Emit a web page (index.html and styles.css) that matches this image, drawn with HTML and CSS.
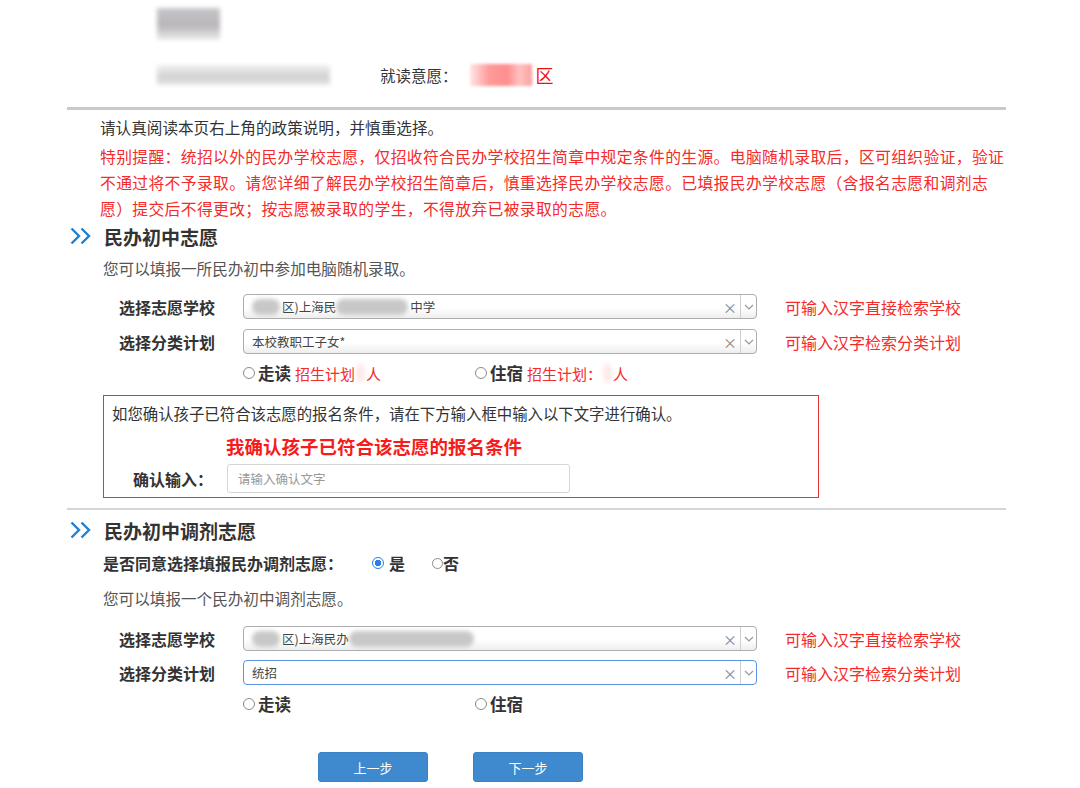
FILE: index.html
```html
<!DOCTYPE html>
<html lang="zh-CN">
<head>
<meta charset="utf-8">
<title>民办初中志愿</title>
<link rel="stylesheet" href="styles.css">
</head>
<body>
<div class="top">
  <div class="blur blur-name"></div>
  <div class="info-row">
    <div class="blur blur-id"></div>
    <span class="info-label">就读意愿：</span>
    <span class="blur-pink"></span>
    <span class="info-area">区</span>
  </div>
</div>
<div class="rule"></div>

<div class="main">
  <p class="notice">请认真阅读本页右上角的政策说明，并慎重选择。</p>
  <p class="warn">特别提醒：统招以外的民办学校志愿，仅招收符合民办学校招生简章中规定条件的生源。电脑随机录取后，区可组织验证，验证<br>不通过将不予录取。请您详细了解民办学校招生简章后，慎重选择民办学校志愿。已填报民办学校志愿（含报名志愿和调剂志<br>愿）提交后不得更改；按志愿被录取的学生，不得放弃已被录取的志愿。</p>

  <h2 class="sec-title">
    <svg class="chev" viewBox="0 0 22 18" width="22" height="18"><path d="M1.5 1.5 L9 9 L1.5 16.5 M11.5 1.5 L19 9 L11.5 16.5" fill="none" stroke="#1f7fd1" stroke-width="2.4"/></svg>
    民办初中志愿
  </h2>
  <p class="desc">您可以填报一所民办初中参加电脑随机录取。</p>

  <div class="form-row r1">
    <label class="f-label">选择志愿学校</label>
    <div class="select">
      <span class="sel-text"><span class="blur-s w28"></span>区)上海民<span class="blur-s w70"></span>中学</span>
      <span class="sel-x">×</span><span class="sel-arrow"><svg viewBox="0 0 10 6" width="10" height="6"><path d="M1 1 L5 5 L9 1" fill="none" stroke="#999" stroke-width="1.2"/></svg></span>
    </div>
    <span class="hint">可输入汉字直接检索学校</span>
  </div>
  <div class="form-row r2">
    <label class="f-label">选择分类计划</label>
    <div class="select">
      <span class="sel-text">本校教职工子女*</span>
      <span class="sel-x">×</span><span class="sel-arrow"><svg viewBox="0 0 10 6" width="10" height="6"><path d="M1 1 L5 5 L9 1" fill="none" stroke="#999" stroke-width="1.2"/></svg></span>
    </div>
    <span class="hint">可输入汉字检索分类计划</span>
  </div>
  <div class="radio-row">
    <div class="radio-group"><span class="radio"></span><b>走读</b><span class="plan">招生计划<span class="blur-p"></span>人</span></div>
    <div class="radio-group"><span class="radio"></span><b>住宿</b><span class="plan">招生计划：<span class="blur-p"></span>人</span></div>
  </div>

  <div class="confirm-box">
    <p class="confirm-tip">如您确认孩子已符合该志愿的报名条件，请在下方输入框中输入以下文字进行确认。</p>
    <p class="confirm-text">我确认孩子已符合该志愿的报名条件</p>
    <div class="confirm-row">
      <label class="c-label">确认输入：</label>
      <div class="c-input">请输入确认文字</div>
    </div>
  </div>

  <div class="rule2"></div>

  <h2 class="sec-title t2">
    <svg class="chev" viewBox="0 0 22 18" width="22" height="18"><path d="M1.5 1.5 L9 9 L1.5 16.5 M11.5 1.5 L19 9 L11.5 16.5" fill="none" stroke="#1f7fd1" stroke-width="2.4"/></svg>
    民办初中调剂志愿
  </h2>
  <div class="agree-row">
    <span class="agree-label">是否同意选择填报民办调剂志愿：</span>
    <span class="radio checked"></span><b class="yes">是</b>
    <span class="radio small"></span><b class="no">否</b>
  </div>
  <p class="desc d2">您可以填报一个民办初中调剂志愿。</p>

  <div class="form-row r3">
    <label class="f-label">选择志愿学校</label>
    <div class="select">
      <span class="sel-text"><span class="blur-s w28"></span>区)上海民办<span class="blur-s w110"></span></span>
      <span class="sel-x">×</span><span class="sel-arrow"><svg viewBox="0 0 10 6" width="10" height="6"><path d="M1 1 L5 5 L9 1" fill="none" stroke="#999" stroke-width="1.2"/></svg></span>
    </div>
    <span class="hint">可输入汉字直接检索学校</span>
  </div>
  <div class="form-row r4">
    <label class="f-label">选择分类计划</label>
    <div class="select focus">
      <span class="sel-text">统招</span>
      <span class="sel-x">×</span><span class="sel-arrow"><svg viewBox="0 0 10 6" width="10" height="6"><path d="M1 1 L5 5 L9 1" fill="none" stroke="#999" stroke-width="1.2"/></svg></span>
    </div>
    <span class="hint">可输入汉字检索分类计划</span>
  </div>
  <div class="radio-row">
    <div class="radio-group"><span class="radio"></span><b>走读</b></div>
    <div class="radio-group"><span class="radio"></span><b>住宿</b></div>
  </div>

  <div class="buttons">
    <button class="btn">上一步</button>
    <button class="btn">下一步</button>
  </div>
</div>
</body>
</html>
```

FILE: styles.css
```css
* { box-sizing: border-box; }
body {
  margin: 0;
  background: #fff;
  font-family: "Noto Sans CJK SC", "Noto Sans", sans-serif;
  color: #333;
}
p { margin: 0; }
h2 { margin: 0; }

.top { padding-left: 157px; padding-top: 8px; }
.blur { filter: blur(2px); }
.blur-name {
  width: 63px; height: 32px;
  background: linear-gradient(180deg, #c7c5c8 0%, #b8b6ba 55%, #ececec 100%);
}
.info-row {
  margin-top: 23px;
  height: 24px;
  display: flex;
  align-items: center;
}
.blur-id {
  width: 173px; height: 20px;
  background: linear-gradient(180deg, #f0f0f0 0%, #d2d2d4 60%, #e6e6e6 100%);
}
.info-label { margin-left: 50px; font-size: 15.5px; color: #333; }
.blur-pink {
  display: inline-block;
  width: 62px; height: 22px;
  margin-left: 12px;
  background: linear-gradient(90deg, #ffe6e6 0%, #ff9a9a 30%, #ff8e8e 60%, #ffc2c2 80%, #ff9f9f 100%);
  filter: blur(1.5px);
}
.info-area { color: #f01010; font-size: 18px; margin-left: 4px; }

.rule {
  margin: 20px 0 0 67px;
  width: 939px;
  height: 3px;
  background: #c9c9c9;
}

.main { margin-left: 67px; width: 939px; }
.notice {
  margin-top: 5px;
  padding-left: 33px;
  font-size: 15.6px;
  line-height: 24px;
  color: #333;
}
.warn {
  margin-top: 5px;
  padding-left: 33px;
  font-size: 15.8px;
  letter-spacing: 0.35px;
  line-height: 26px;
  color: #f52a2a;
  white-space: nowrap;
}

.sec-title {
  display: flex;
  align-items: center;
  height: 28px;
  padding-left: 3px;
  font-size: 19px;
  font-weight: bold;
  color: #333;
}
.chev { margin-right: 12px; }
.sec-title.t2 { margin-top: 6px; }

.desc {
  margin-top: 6px;
  padding-left: 36px;
  font-size: 15.6px;
  line-height: 24px;
  color: #555;
}
.desc.d2 { margin-top: 11px; }

.form-row {
  display: flex;
  align-items: center;
  height: 25px;
  padding-left: 52px;
}
.r1 { margin-top: 14px; }
.r2 { margin-top: 10px; }
.r3 { margin-top: 16px; }
.r4 { margin-top: 9px; }
.f-label {
  width: 124px;
  font-size: 16px;
  font-weight: bold;
  color: #333;
}
.select {
  width: 514px;
  height: 25px;
  border: 1px solid #adadad;
  border-radius: 4px;
  background: linear-gradient(180deg, #ffffff 0%, #ffffff 55%, #eeeeee 100%);
  display: flex;
  align-items: center;
  padding-left: 8px;
}
.select.focus {
  border-color: #5b93e0;
  background: #fff;
}
.sel-text {
  flex: 1;
  font-size: 12.5px;
  color: #444;
  display: flex;
  align-items: center;
}
.blur-s {
  display: inline-block;
  height: 16px;
  background: #c8c8c8;
  filter: blur(2px);
  border-radius: 8px;
}
.w28 { width: 28px; margin-right: 2px; }
.w70 { width: 72px; margin-right: 2px; }
.w110 { width: 125px; }
.sel-x {
  width: 20px;
  font-size: 14px;
  color: #888;
  text-align: center;
}
.sel-arrow {
  width: 16px;
  height: 23px;
  border-left: 1px solid #cfcfcf;
  display: flex;
  align-items: center;
  justify-content: center;
}
.hint {
  margin-left: 28px;
  font-size: 16px;
  color: #f52a2a;
}

.radio-row {
  display: flex;
  align-items: center;
  height: 24px;
  margin-top: 7px;
  padding-left: 176px;
}
.radio-group {
  width: 232px;
  display: flex;
  align-items: center;
  font-size: 16.5px;
}
.radio-group b { margin-left: 3px; color: #333; }
.radio {
  display: inline-block;
  width: 12px; height: 12px;
  border: 1px solid #8a8a8a;
  border-radius: 50%;
  background: #fff;
}
.radio.checked {
  border: 1.5px solid #2b7fe6;
  background: radial-gradient(circle, #2b7fe6 0 3px, #fff 3.5px);
}
.plan {
  margin-left: 4px;
  font-size: 15px;
  color: #f52a2a;
  display: flex;
  align-items: center;
}
.blur-p {
  display: inline-block;
  width: 9px; height: 20px;
  margin: 0 1px 0 1px;
  background: #ffe8e8;
  border-radius: 50%;
  filter: blur(2px);
}

.confirm-box {
  margin: 10px 0 0 36px;
  width: 716px;
  border: 1px solid #e53535;
  padding: 5px 8px 4px 8px;
}
.confirm-tip { font-size: 15.4px; line-height: 24px; color: #333; }
.confirm-text {
  margin-top: 8px;
  padding-left: 114px;
  font-size: 18.5px;
  line-height: 26px;
  font-weight: bold;
  color: #f51c1c;
}
.confirm-row {
  margin-top: 5px;
  display: flex;
  align-items: center;
  height: 29px;
}
.c-label {
  width: 115px;
  padding-left: 21px;
  font-size: 16px;
  font-weight: bold;
  color: #333;
}
.c-input {
  width: 343px;
  height: 29px;
  border: 1px solid #d6d6d6;
  border-radius: 3px;
  padding-left: 10px;
  font-size: 12.5px;
  line-height: 27px;
  color: #999;
}

.rule2 {
  margin-top: 10px;
  height: 2px;
  background: #d5d5d5;
}

.agree-row {
  margin-top: 7px;
  height: 24px;
  padding-left: 36px;
  display: flex;
  align-items: center;
  font-size: 16px;
}
.agree-label { width: 269px; font-weight: bold; color: #333; }
.yes { margin-left: 5px; color: #333; }
.radio.small { margin-left: 27px; width: 11px; height: 11px; }
.no { color: #333; }

.buttons {
  margin-top: 36px;
  padding-left: 251px;
  display: flex;
  gap: 45px;
}
.btn {
  width: 110px;
  height: 30px;
  border: 1px solid #3a82c4;
  border-radius: 3px;
  background: #3f8ace;
  color: #fff;
  font-family: "Noto Sans CJK SC", sans-serif;
  font-size: 13px;
}
```
